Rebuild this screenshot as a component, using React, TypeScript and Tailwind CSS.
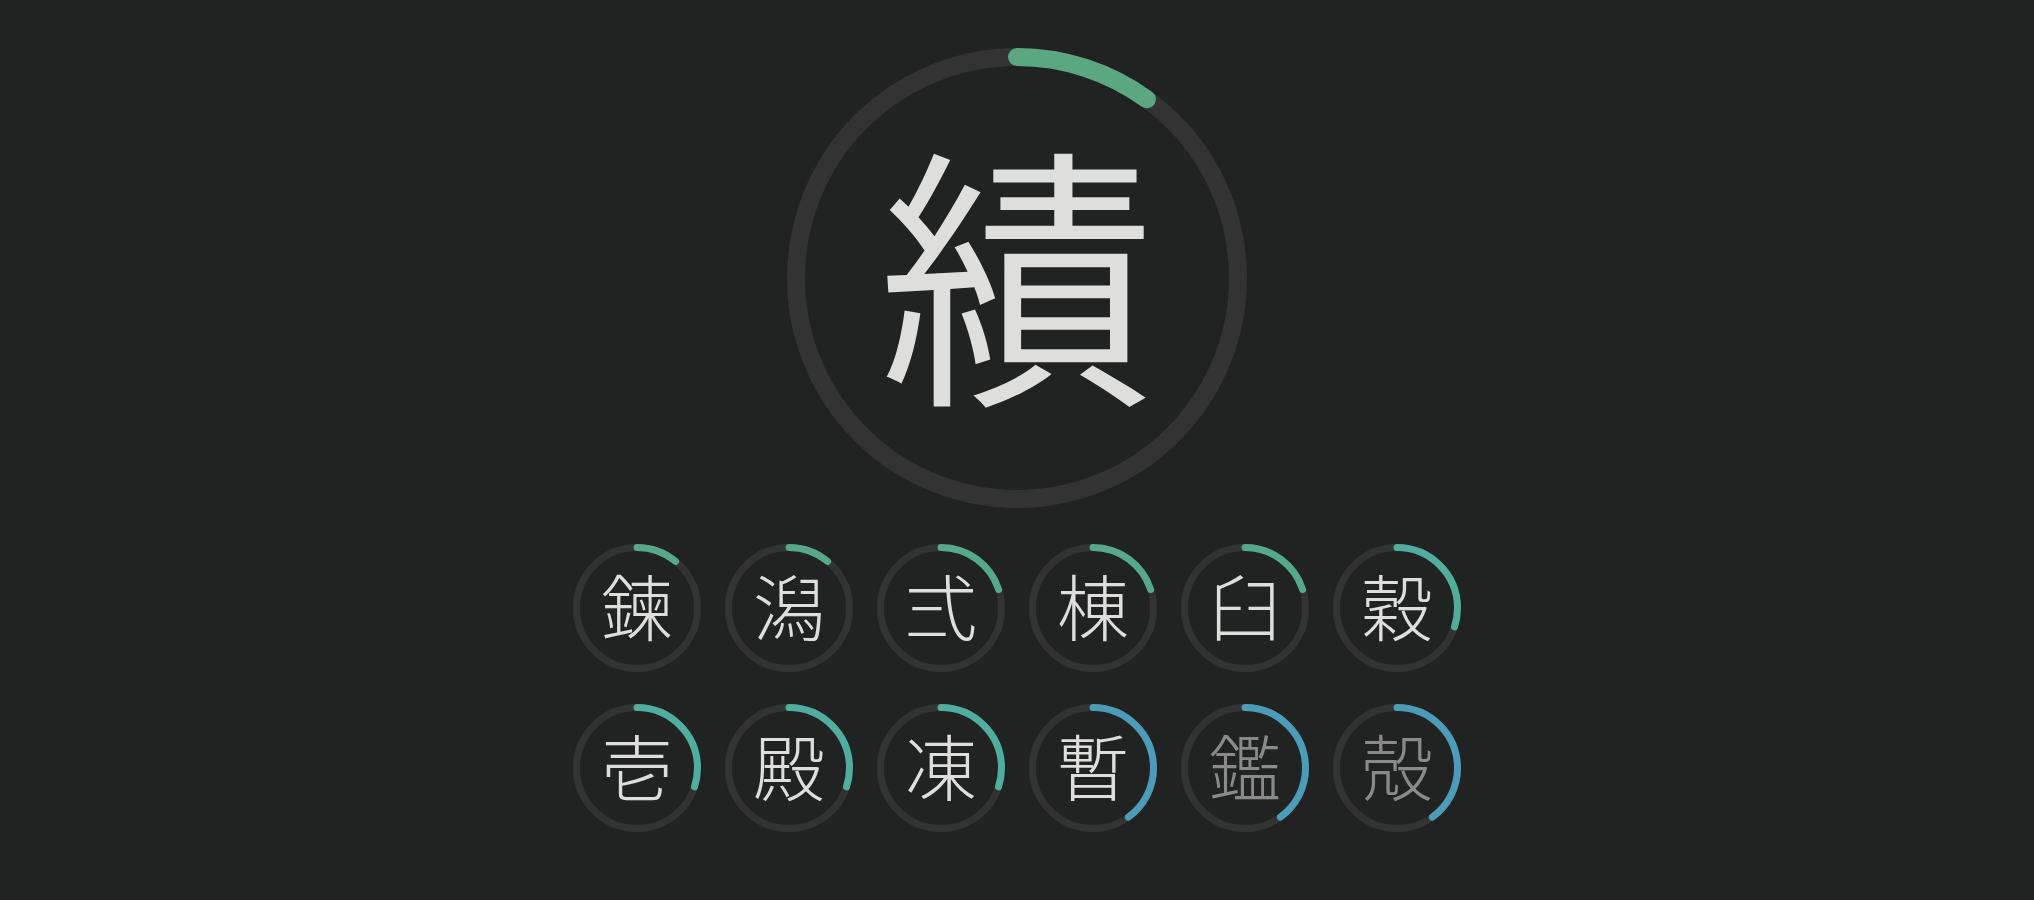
import React from 'react';

type Kanji = {
  char: string;
  progress: number;
  color: string;
  dim?: boolean;
};

const kanjiList: Kanji[] = [
  { char: '鍊', progress: 0.11, color: '#56a886' },
  { char: '潟', progress: 0.11, color: '#56a886' },
  { char: '弍', progress: 0.2, color: '#55a98a' },
  { char: '棟', progress: 0.2, color: '#55a98a' },
  { char: '臼', progress: 0.2, color: '#55a98a' },
  { char: '穀', progress: 0.3, color: '#51ad9d' },
  { char: '壱', progress: 0.3, color: '#4fae9f' },
  { char: '殿', progress: 0.3, color: '#4fae9f' },
  { char: '凍', progress: 0.3, color: '#4fae9f' },
  { char: '暫', progress: 0.4, color: '#4b9cb8' },
  { char: '鑑', progress: 0.4, color: '#4b9cb8', dim: true },
  { char: '殻', progress: 0.4, color: '#4b9cb8', dim: true },
];

const Ring: React.FC<{
  size: number;
  stroke: number;
  progress: number;
  color: string;
  children: React.ReactNode;
  className?: string;
}> = ({ size, stroke, progress, color, children, className }) => {
  const r = (size - stroke) / 2;
  const c = 2 * Math.PI * r;

  return (
    <div className={`relative flex items-center justify-center ${className ?? ''}`}>
      <svg width={size} height={size} className="absolute inset-0 -rotate-90">
        <circle cx={size / 2} cy={size / 2} r={r} fill="none" stroke="#333333" strokeWidth={stroke} />
        <circle
          cx={size / 2}
          cy={size / 2}
          r={r}
          fill="none"
          stroke={color}
          strokeWidth={stroke}
          strokeLinecap="round"
          strokeDasharray={`${c * progress} ${c}`}
        />
      </svg>
      {children}
    </div>
  );
};

const App: React.FC = () => {
  return (
    <div
      className="min-h-[900px] w-full bg-[#212222] flex flex-col items-center pt-[48px]"
      style={{ fontFamily: '"Noto Sans CJK JP", "Noto Sans CJK SC", sans-serif' }}
    >
      {/* Current kanji */}
      <Ring size={460} stroke={18} progress={0.1} color="#5aa781" className="w-[460px] h-[460px]">
        <span className="relative pb-[26px] text-[276px] leading-none text-[#dededc] font-[350]">績</span>
      </Ring>

      {/* Queue */}
      <div className="mt-[36px] grid grid-cols-6 gap-x-[24px] gap-y-[32px]">
        {kanjiList.map((k) => (
          <Ring
            key={k.char}
            size={128}
            stroke={7}
            progress={k.progress}
            color={k.color}
            className="w-[128px] h-[128px]"
          >
            <span
              className={`relative pb-[8px] text-[72px] leading-none font-light ${
                k.dim ? 'text-[#8a8a8a]' : 'text-[#dededc]'
              }`}
            >
              {k.char}
            </span>
          </Ring>
        ))}
      </div>
    </div>
  );
};

export default App;
